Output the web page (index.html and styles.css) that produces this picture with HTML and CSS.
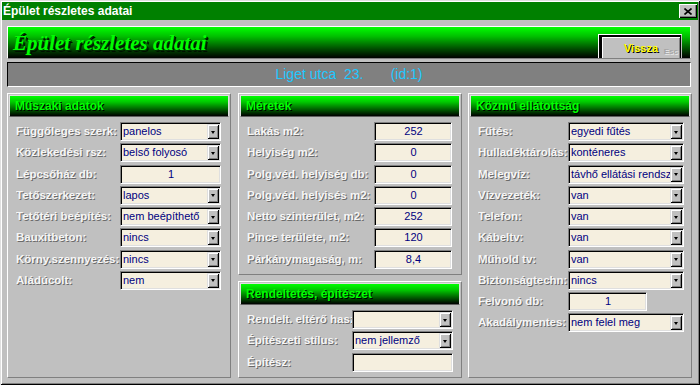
FILE: index.html
```html
<!DOCTYPE html>
<html lang="hu">
<head>
<meta charset="utf-8">
<title>Épület részletes adatai</title>
<link rel="stylesheet" href="styles.css">
</head>
<body>
<div class="window">
  <div class="titlebar">
    <span class="title">Épület részletes adatai</span>
    <span class="close"><svg width="8" height="7" viewBox="0 0 8 7"><path d="M0.5 0.5 L7.5 6.5 M7.5 0.5 L0.5 6.5" stroke="#000" stroke-width="1.6" fill="none"/></svg></span>
  </div>
  <div class="content">
    <div class="banner">
      <span class="banner-title">Épület részletes adatai</span>
      <div class="back-frame">
        <div class="back"><span class="back-label">Vissza</span><span class="esc">Esc</span></div>
      </div>
    </div>
    <div class="address">Liget utca  23.       (id:1)</div>
    <div class="panels">
      <section class="panel panel-left">
        <div class="panel-head">Műszaki adatok</div>
        <div class="rows rows-left">
          <div class="lbl">Függőleges szerk:</div><div class="fld"><span class="val">panelos</span><span class="drop"><i></i></span></div>
          <div class="lbl">Közlekedési rsz:</div><div class="fld"><span class="val">belső folyosó</span><span class="drop"><i></i></span></div>
          <div class="lbl">Lépcsőház db:</div><div class="fld num"><span class="val">1</span></div>
          <div class="lbl">Tetőszerkezet:</div><div class="fld"><span class="val">lapos</span><span class="drop"><i></i></span></div>
          <div class="lbl">Tetőtéri beépítés:</div><div class="fld"><span class="val">nem beépíthető</span><span class="drop"><i></i></span></div>
          <div class="lbl">Bauxitbeton:</div><div class="fld"><span class="val">nincs</span><span class="drop"><i></i></span></div>
          <div class="lbl">Körny.szennyezés:</div><div class="fld"><span class="val">nincs</span><span class="drop"><i></i></span></div>
          <div class="lbl">Aládúcolt:</div><div class="fld"><span class="val">nem</span><span class="drop"><i></i></span></div>
        </div>
      </section>
      <div class="mid-col">
        <section class="panel panel-mid1">
          <div class="panel-head">Méretek</div>
          <div class="rows rows-mid1">
            <div class="lbl">Lakás m2:</div><div class="fld num"><span class="val">252</span></div>
            <div class="lbl">Helyiség m2:</div><div class="fld num"><span class="val">0</span></div>
            <div class="lbl">Polg.véd. helyiség db:</div><div class="fld num"><span class="val">0</span></div>
            <div class="lbl">Polg.véd. helyisés m2:</div><div class="fld num"><span class="val">0</span></div>
            <div class="lbl">Netto szinterület, m2:</div><div class="fld num"><span class="val">252</span></div>
            <div class="lbl">Pince területe, m2:</div><div class="fld num"><span class="val">120</span></div>
            <div class="lbl">Párkánymagaság, m:</div><div class="fld num"><span class="val">8,4</span></div>
          </div>
        </section>
        <section class="panel panel-mid2">
          <div class="panel-head">Rendeltetés, építészet</div>
          <div class="rows rows-mid2">
            <div class="lbl">Rendelt. eltérő használat:</div><div class="fld"><span class="val"></span><span class="drop"><i></i></span></div>
            <div class="lbl">Építészeti stílus:</div><div class="fld"><span class="val">nem jellemző</span><span class="drop"><i></i></span></div>
            <div class="lbl">Építész:</div><div class="fld"><span class="val"></span></div>
          </div>
        </section>
      </div>
      <section class="panel panel-right">
        <div class="panel-head">Közmű ellátottság</div>
        <div class="rows rows-right">
          <div class="lbl">Fűtés:</div><div class="fld"><span class="val">egyedi fűtés</span><span class="drop"><i></i></span></div>
          <div class="lbl">Hulladéktárolás:</div><div class="fld"><span class="val">konténeres</span><span class="drop"><i></i></span></div>
          <div class="lbl">Melegvíz:</div><div class="fld"><span class="val">távhő ellátási rendszer</span><span class="drop"><i></i></span></div>
          <div class="lbl">Vízvezeték:</div><div class="fld"><span class="val">van</span><span class="drop"><i></i></span></div>
          <div class="lbl">Telefon:</div><div class="fld"><span class="val">van</span><span class="drop"><i></i></span></div>
          <div class="lbl">Kábeltv:</div><div class="fld"><span class="val">van</span><span class="drop"><i></i></span></div>
          <div class="lbl">Műhold tv:</div><div class="fld"><span class="val">van</span><span class="drop"><i></i></span></div>
          <div class="lbl">Biztonságtechn:</div><div class="fld"><span class="val">nincs</span><span class="drop"><i></i></span></div>
          <div class="lbl">Felvonó db:</div><div class="fld num short"><span class="val">1</span></div>
          <div class="lbl">Akadálymentes:</div><div class="fld"><span class="val">nem felel meg</span><span class="drop"><i></i></span></div>
        </div>
      </section>
    </div>
  </div>
</div>
</body>
</html>
```

FILE: styles.css
```css
* { box-sizing: border-box; }
html, body { margin: 0; padding: 0; }
body { background: #c0c0c0; font-family: "Liberation Sans", Arial, sans-serif; }

.window {
  width: 700px;
  height: 385px;
  background: #c0c0c0;
  padding: 2px;
  box-shadow: inset 1px 1px 0 #dfdfdf, inset -1px -1px 0 #000, inset 2px 2px 0 #fff, inset -2px -2px 0 #808080;
  overflow: hidden;
}

.titlebar {
  height: 18px;
  background: #008000;
  display: flex;
  align-items: center;
  justify-content: space-between;
  padding-left: 1px;
  padding-right: 1px;
}
.title {
  color: #fff;
  font-weight: bold;
  font-size: 12px;
  line-height: 18px;
}
.close {
  width: 18px;
  height: 14px;
  background: #c0c0c0;
  display: flex;
  align-items: center;
  justify-content: center;
  box-shadow: inset 1px 1px 0 #fff, inset -1px -1px 0 #000, inset -2px -2px 0 #808080;
}

.content {
  padding: 6px 6px 0 5px;
}

.banner {
  height: 33px;
  margin-right: 1px;
  border-top: 1px solid #fff;
  border-left: 1px solid #fff;
  border-right: 1px solid #e8e8e8;
  border-bottom: 1px solid #808080;
  background: linear-gradient(#00ff00 0%, #00c000 30%, #004000 75%, #000 100%);
  display: flex;
  align-items: flex-end;
  justify-content: space-between;
  padding-left: 5px;
  padding-right: 8px;
}
.banner-title {
  align-self: center;
  font-family: "Liberation Serif", "Times New Roman", serif;
  font-weight: bold;
  font-style: italic;
  font-size: 21px;
  color: #00ff00;
  text-shadow: 1px 1px 0 #003000, 2px 2px 0 #001000;
  margin-top: 1px;
}
.back-frame {
  width: 84px;
  height: 24px;
  border-top: 1px solid #fff;
  border-left: 1px solid #fff;
  border-right: 1px solid #bdbdbd;
  background: #000;
  padding: 2px 1px 0 3px;
  margin-bottom: 0;
}
.back {
  position: relative;
  height: 100%;
  background: #c0c0c0;
  box-shadow: inset 1px 1px 0 #fff, inset -1px 0 0 #808080;
  display: flex;
  align-items: center;
  justify-content: center;
}
.back-label {
  color: #ffff00;
  font-weight: bold;
  font-size: 11px;
  text-shadow: 1px 1px 0 #000;
  margin-top: 1px;
}
.esc {
  position: absolute;
  right: 2px;
  bottom: 2px;
  font-size: 8px;
  font-weight: bold;
  color: #a6a6a6;
  text-shadow: 1px 1px 0 #e6e6e6;
}

.address {
  height: 25px;
  margin-top: 3px;
  margin-right: 1px;
  background: #808080;
  border-top: 1px solid #000;
  border-left: 1px solid #000;
  border-right: 1px solid #fff;
  border-bottom: 1px solid #fff;
  color: #1ec8ff;
  font-size: 14px;
  line-height: 23px;
  text-align: center;
  white-space: pre;
}

.panels {
  margin-top: 6px;
  display: flex;
  height: 285px;
}
.panel {
  width: 224px;
  border-top: 1px solid #fff;
  border-left: 1px solid #fff;
  border-right: 1px solid #808080;
  border-bottom: 1px solid #808080;
  padding: 1px;
}
.panel-left { margin-right: 7px; }
.mid-col {
  width: 224px;
  margin-right: 6px;
  display: flex;
  flex-direction: column;
  gap: 6px;
}
.panel-mid1 { height: 182px; }
.panel-mid2 { flex: 1; }

.panel-head {
  height: 22px;
  border-top: 1px solid #e0e0e0;
  border-left: 1px solid #e0e0e0;
  border-right: 1px solid #e0e0e0;
  border-bottom: 1px solid #606060;
  background: linear-gradient(#00ff00 0%, #00c800 30%, #004800 75%, #000 100%);
  color: #00ff00;
  font-weight: bold;
  font-size: 12px;
  line-height: 20px;
  padding-left: 5px;
  text-shadow: 1px 1px 0 #000;
  white-space: nowrap;
}

.rows {
  display: grid;
  grid-auto-rows: 19px;
  row-gap: 2.25px;
  margin-top: 5px;
  padding-left: 7px;
}
.rows-left { grid-template-columns: 104px 101px; }
.rows-mid1 { grid-template-columns: 127px 78px; }
.rows-mid2 { grid-template-columns: 105px 101px; }
.rows-right { grid-template-columns: 90px 116px; padding-left: 8px; }

.lbl {
  font-weight: bold;
  font-size: 11.5px;
  line-height: 19px;
  color: #f6f6f6;
  text-shadow: 1px 1px 0 #6a6a6a;
  white-space: nowrap;
  overflow: hidden;
}

.fld {
  height: 19px;
  background: #f5efdf;
  border-top: 1px solid #808080;
  border-left: 1px solid #808080;
  border-right: 1px solid #fff;
  border-bottom: 1px solid #fff;
  box-shadow: inset 1px 1px 0 #000, inset -1px -1px 0 #dfdfdf;
  padding: 1px;
  display: flex;
  align-items: stretch;
  overflow: hidden;
}
.fld.short { width: 79px; }
.val {
  flex: 1;
  min-width: 0;
  padding-left: 1px;
  color: #000080;
  font-size: 11px;
  line-height: 15px;
  white-space: nowrap;
  overflow: hidden;
}
.num .val { text-align: center; }
.drop {
  width: 12px;
  flex: none;
  background: #c0c0c0;
  box-shadow: inset 1px 1px 0 #dfdfdf, inset -1px -1px 0 #000, inset 2px 2px 0 #fff, inset -2px -2px 0 #808080;
  display: flex;
  align-items: center;
  justify-content: center;
}
.drop i {
  display: block;
  width: 0;
  height: 0;
  margin-top: 1px;
  border-top: 3px solid #000;
  border-left: 2.5px solid transparent;
  border-right: 2.5px solid transparent;
}
```
